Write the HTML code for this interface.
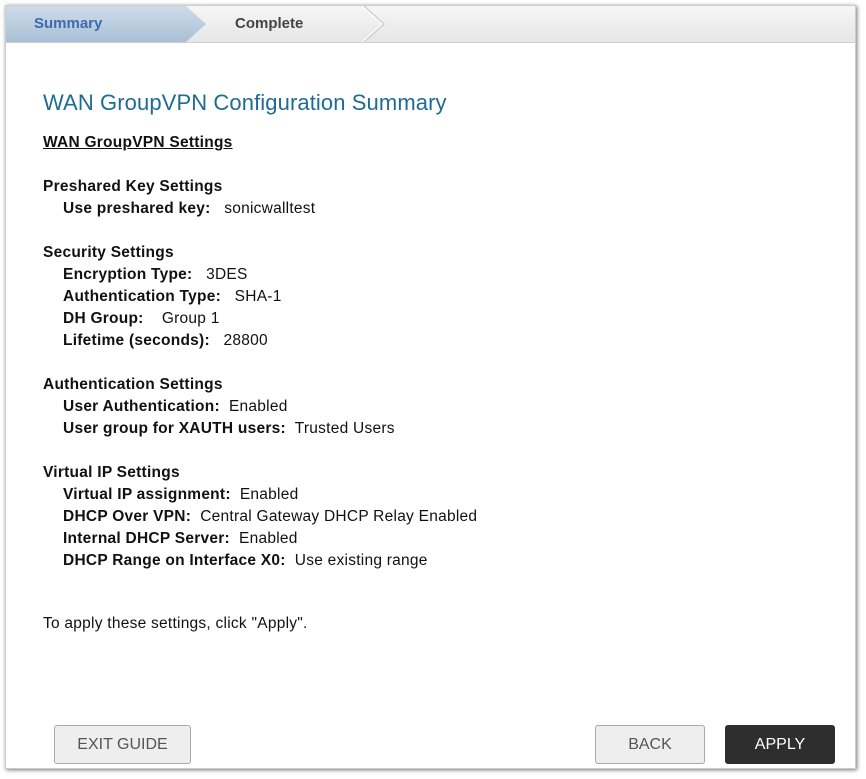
<!DOCTYPE html>
<html><head><style>
body{margin:0;width:866px;height:779px;background:#fff;font-family:"Liberation Sans",sans-serif;position:relative;overflow:hidden}
.panel{position:absolute;left:5px;top:5px;width:851px;height:764px;background:#fff;box-shadow:1px 1px 4px rgba(0,0,0,.55);border:1px solid #ccc;box-sizing:border-box}
.bc{position:absolute;left:0;top:0;width:100%;height:36px;background:linear-gradient(#f6f6f6,#e6e6e6);border-bottom:1px solid #d0d0d0}
.t{position:absolute;font-size:15.5px;letter-spacing:0.25px;color:#111;white-space:nowrap;line-height:22px}
.b{font-weight:bold}
.btn{position:absolute;top:725px;height:39px;box-sizing:border-box;border:1px solid #aaa;border-radius:3px;background:#eee;color:#555;font-size:16px;display:flex;align-items:center;justify-content:center}
</style></head><body>
<div class="panel">
<div class="bc">
<svg width="851" height="36" style="position:absolute;left:0;top:0">
<defs><linearGradient id="g" x1="0" y1="0" x2="0" y2="1"><stop offset="0" stop-color="#cfdce9"/><stop offset="1" stop-color="#a9bfd6"/></linearGradient></defs>
<polygon points="0,0 180,0 200,18 180,36 0,36" fill="url(#g)"/>
<polyline points="358,0 378,18 358,36" fill="none" stroke="#d0d0d0" stroke-width="1.5"/>
<polyline points="358,0 378,18 358,36" fill="none" stroke="#fff" stroke-width="1" transform="translate(-2,0)"/>
</svg>
<div style="position:absolute;left:28px;top:9px;font-size:15px;font-weight:bold;color:#3e6bab">Summary</div>
<div style="position:absolute;left:229px;top:9px;font-size:15px;font-weight:bold;color:#444">Complete</div>
</div>
</div>
<div class="t" style="left:43px;top:89px;font-size:22px;letter-spacing:0.1px;color:#1f6b93;line-height:28px">WAN GroupVPN Configuration Summary</div>
<div class="t b" style="left:43px;top:132px;text-decoration:underline">WAN GroupVPN Settings</div>
<div class="t b" style="left:43px;top:176px">Preshared Key Settings</div>
<div class="t" style="left:63px;top:198px"><b>Use preshared key:</b>&nbsp;&nbsp; sonicwalltest</div>
<div class="t b" style="left:43px;top:242px">Security Settings</div>
<div class="t" style="left:63px;top:264px"><b>Encryption Type:</b>&nbsp;&nbsp; 3DES</div>
<div class="t" style="left:63px;top:286px"><b>Authentication Type:</b>&nbsp;&nbsp; SHA-1</div>
<div class="t" style="left:63px;top:308px"><b>DH Group:</b>&nbsp;&nbsp;&nbsp; Group 1</div>
<div class="t" style="left:63px;top:330px"><b>Lifetime (seconds):</b>&nbsp;&nbsp; 28800</div>
<div class="t b" style="left:43px;top:374px">Authentication Settings</div>
<div class="t" style="left:63px;top:396px"><b>User Authentication:</b>&nbsp; Enabled</div>
<div class="t" style="left:63px;top:418px"><b>User group for XAUTH users:</b>&nbsp; Trusted Users</div>
<div class="t b" style="left:43px;top:462px">Virtual IP Settings</div>
<div class="t" style="left:63px;top:484px"><b>Virtual IP assignment:</b>&nbsp; Enabled</div>
<div class="t" style="left:63px;top:506px"><b>DHCP Over VPN:</b>&nbsp; Central Gateway DHCP Relay Enabled</div>
<div class="t" style="left:63px;top:528px"><b>Internal DHCP Server:</b>&nbsp; Enabled</div>
<div class="t" style="left:63px;top:550px"><b>DHCP Range on Interface X0:</b>&nbsp; Use existing range</div>
<div class="t" style="left:43px;top:613px">To apply these settings, click "Apply".</div>
<div class="btn" style="left:54px;width:137px">EXIT GUIDE</div>
<div class="btn" style="left:595px;width:110px">BACK</div>
<div class="btn" style="left:725px;width:110px;background:#2e2e2e;border-color:#2e2e2e;color:#fff">APPLY</div>
</body></html>
